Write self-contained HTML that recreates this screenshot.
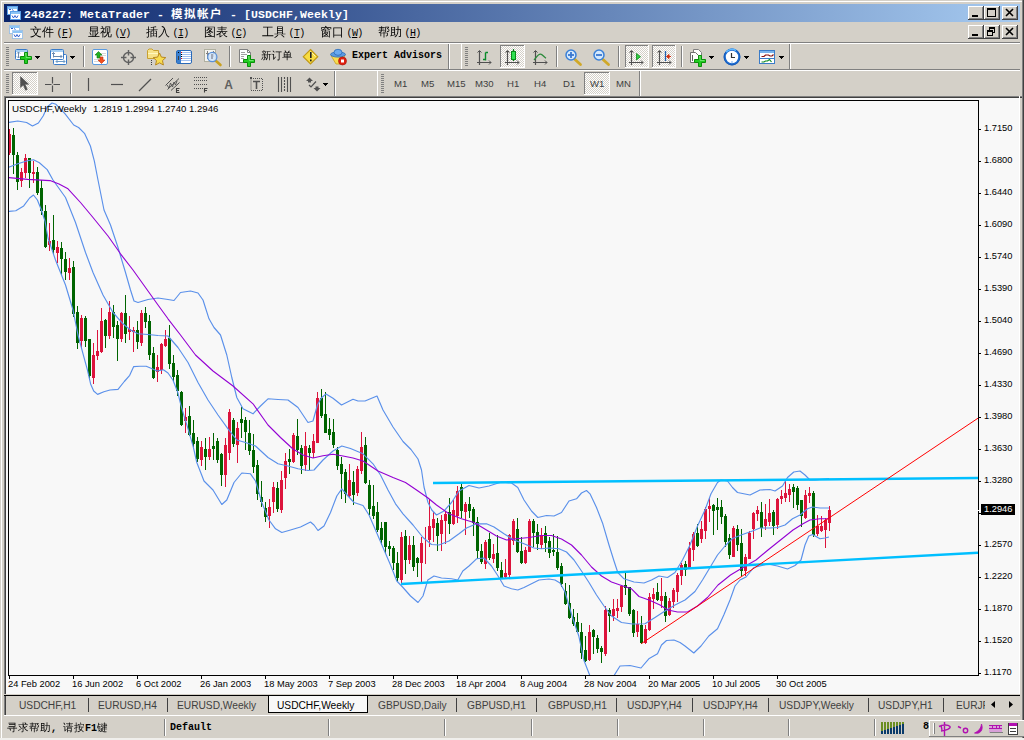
<!DOCTYPE html><html><head><meta charset="utf-8"><title>248227: MetaTrader - 模拟帐户 - [USDCHF,Weekly]</title>
<style>
html,body{margin:0;padding:0;background:#d4d0c8;overflow:hidden}
body{width:1024px;height:740px;position:relative;font-family:"Liberation Sans","Noto Sans CJK SC",sans-serif}
svg{position:absolute;left:0;top:0;display:block}
.t{position:absolute;white-space:nowrap;line-height:1;color:#000}
.ui{font-family:"Liberation Mono","WenQuanYi Zen Hei","Noto Sans CJK SC",monospace}
.cjb{font-family:"Noto Sans CJK SC",sans-serif;font-weight:bold}
.cj{font-family:"WenQuanYi Zen Hei","Noto Sans CJK SC",sans-serif}
.ax{font-size:9.3px;font-family:"Liberation Sans",sans-serif}
.tab{font-size:10.2px;color:#404040;font-family:"Liberation Sans",sans-serif;transform:scaleY(1.08);transform-origin:0 0}
.per{font-size:9.6px;color:#404040;font-family:"Liberation Sans",sans-serif}
</style></head><body>
<svg width="1024" height="740" viewBox="0 0 1024 740">
<defs>
<linearGradient id="tg" x1="0" y1="0" x2="1" y2="0"><stop offset="0" stop-color="#0a246a"/><stop offset="1" stop-color="#a6caf0"/></linearGradient>
<pattern id="hat" width="2" height="2" patternUnits="userSpaceOnUse"><rect width="2" height="2" fill="#ffffff"/><rect width="1" height="1" fill="#d4d0c8"/><rect x="1" y="1" width="1" height="1" fill="#d4d0c8"/></pattern>
<clipPath id="cc"><rect x="9" y="101" width="969" height="574"/></clipPath>
</defs>
<g shape-rendering="crispEdges">
<rect x="0" y="0" width="1024" height="740" fill="#d4d0c8" />
<rect x="1" y="1" width="1021" height="1" fill="#ffffff" />
<rect x="1" y="1" width="1" height="738" fill="#ffffff" />
<rect x="1022" y="0" width="1" height="740" fill="#808080" />
<rect x="1023" y="0" width="1" height="740" fill="#404040" />
<rect x="0" y="738" width="1024" height="2" fill="#f0efec" />
<rect x="4" y="4" width="1016" height="18" fill="url(#tg)" />
<rect x="4" y="42" width="1016" height="1" fill="#808080" />
<rect x="4" y="43" width="1016" height="1" fill="#ffffff" />
<rect x="4" y="69" width="1016" height="1" fill="#808080" />
<rect x="4" y="70" width="1016" height="1" fill="#ffffff" />
<rect x="6" y="47" width="3" height="1" fill="#808080" />
<rect x="6" y="49" width="3" height="1" fill="#808080" />
<rect x="6" y="51" width="3" height="1" fill="#808080" />
<rect x="6" y="53" width="3" height="1" fill="#808080" />
<rect x="6" y="55" width="3" height="1" fill="#808080" />
<rect x="6" y="57" width="3" height="1" fill="#808080" />
<rect x="6" y="59" width="3" height="1" fill="#808080" />
<rect x="6" y="61" width="3" height="1" fill="#808080" />
<rect x="6" y="63" width="3" height="1" fill="#808080" />
<rect x="6" y="65" width="3" height="1" fill="#808080" />
<rect x="83" y="46" width="1" height="21" fill="#808080" />
<rect x="84" y="46" width="1" height="21" fill="#ffffff" />
<rect x="229" y="46" width="1" height="21" fill="#808080" />
<rect x="230" y="46" width="1" height="21" fill="#ffffff" />
<rect x="448" y="44" width="1" height="25" fill="#808080" />
<rect x="449" y="44" width="1" height="25" fill="#ffffff" />
<rect x="461" y="44" width="1" height="25" fill="#ffffff" />
<rect x="465" y="47" width="3" height="1" fill="#808080" />
<rect x="465" y="49" width="3" height="1" fill="#808080" />
<rect x="465" y="51" width="3" height="1" fill="#808080" />
<rect x="465" y="53" width="3" height="1" fill="#808080" />
<rect x="465" y="55" width="3" height="1" fill="#808080" />
<rect x="465" y="57" width="3" height="1" fill="#808080" />
<rect x="465" y="59" width="3" height="1" fill="#808080" />
<rect x="465" y="61" width="3" height="1" fill="#808080" />
<rect x="465" y="63" width="3" height="1" fill="#808080" />
<rect x="465" y="65" width="3" height="1" fill="#808080" />
<rect x="500" y="45" width="25" height="23" fill="url(#hat)" />
<rect x="500" y="45" width="25" height="1" fill="#808080" />
<rect x="500" y="45" width="1" height="23" fill="#808080" />
<rect x="500" y="67" width="25" height="1" fill="#ffffff" />
<rect x="524" y="45" width="1" height="23" fill="#ffffff" />
<rect x="556" y="46" width="1" height="21" fill="#808080" />
<rect x="557" y="46" width="1" height="21" fill="#ffffff" />
<rect x="618" y="46" width="1" height="21" fill="#808080" />
<rect x="619" y="46" width="1" height="21" fill="#ffffff" />
<rect x="625" y="45" width="24" height="23" fill="url(#hat)" />
<rect x="625" y="45" width="24" height="1" fill="#808080" />
<rect x="625" y="45" width="1" height="23" fill="#808080" />
<rect x="625" y="67" width="24" height="1" fill="#ffffff" />
<rect x="648" y="45" width="1" height="23" fill="#ffffff" />
<rect x="652" y="45" width="24" height="23" fill="url(#hat)" />
<rect x="652" y="45" width="24" height="1" fill="#808080" />
<rect x="652" y="45" width="1" height="23" fill="#808080" />
<rect x="652" y="67" width="24" height="1" fill="#ffffff" />
<rect x="675" y="45" width="1" height="23" fill="#ffffff" />
<rect x="681" y="46" width="1" height="21" fill="#808080" />
<rect x="682" y="46" width="1" height="21" fill="#ffffff" />
<rect x="789" y="44" width="1" height="25" fill="#808080" />
<rect x="790" y="44" width="1" height="25" fill="#ffffff" />
<rect x="6" y="74" width="3" height="1" fill="#808080" />
<rect x="6" y="76" width="3" height="1" fill="#808080" />
<rect x="6" y="78" width="3" height="1" fill="#808080" />
<rect x="6" y="80" width="3" height="1" fill="#808080" />
<rect x="6" y="82" width="3" height="1" fill="#808080" />
<rect x="6" y="84" width="3" height="1" fill="#808080" />
<rect x="6" y="86" width="3" height="1" fill="#808080" />
<rect x="6" y="88" width="3" height="1" fill="#808080" />
<rect x="6" y="90" width="3" height="1" fill="#808080" />
<rect x="6" y="92" width="3" height="1" fill="#808080" />
<rect x="12" y="72" width="26" height="23" fill="url(#hat)" />
<rect x="12" y="72" width="26" height="1" fill="#808080" />
<rect x="12" y="72" width="1" height="23" fill="#808080" />
<rect x="12" y="94" width="26" height="1" fill="#ffffff" />
<rect x="37" y="72" width="1" height="23" fill="#ffffff" />
<rect x="70" y="73" width="1" height="21" fill="#808080" />
<rect x="71" y="73" width="1" height="21" fill="#ffffff" />
<rect x="334" y="71" width="1" height="25" fill="#808080" />
<rect x="335" y="71" width="1" height="25" fill="#ffffff" />
<rect x="377" y="71" width="1" height="25" fill="#ffffff" />
<rect x="381" y="74" width="3" height="1" fill="#808080" />
<rect x="381" y="76" width="3" height="1" fill="#808080" />
<rect x="381" y="78" width="3" height="1" fill="#808080" />
<rect x="381" y="80" width="3" height="1" fill="#808080" />
<rect x="381" y="82" width="3" height="1" fill="#808080" />
<rect x="381" y="84" width="3" height="1" fill="#808080" />
<rect x="381" y="86" width="3" height="1" fill="#808080" />
<rect x="381" y="88" width="3" height="1" fill="#808080" />
<rect x="381" y="90" width="3" height="1" fill="#808080" />
<rect x="381" y="92" width="3" height="1" fill="#808080" />
<rect x="584" y="72" width="26" height="23" fill="url(#hat)" />
<rect x="584" y="72" width="26" height="1" fill="#808080" />
<rect x="584" y="72" width="1" height="23" fill="#808080" />
<rect x="584" y="94" width="26" height="1" fill="#ffffff" />
<rect x="609" y="72" width="1" height="23" fill="#ffffff" />
<rect x="639" y="71" width="1" height="25" fill="#808080" />
<rect x="640" y="71" width="1" height="25" fill="#ffffff" />
<rect x="4" y="96" width="1018" height="1" fill="#808080" />
<rect x="4" y="96" width="1" height="599" fill="#808080" />
<rect x="5" y="97" width="1017" height="1" fill="#404040" />
<rect x="5" y="97" width="1" height="598" fill="#404040" />
<rect x="6" y="98" width="1013" height="596" fill="#f8f8f8" />
<rect x="1019" y="96" width="1" height="599" fill="#ffffff" />
<rect x="4" y="694" width="1016" height="1" fill="#d4d0c8" />
<rect x="4" y="695" width="1016" height="1" fill="#000000" />
<rect x="4" y="696" width="1" height="19" fill="#808080" />
<rect x="5" y="696" width="1" height="19" fill="#404040" />
<rect x="268" y="696" width="100" height="16" fill="#f8f8f8" />
<rect x="268" y="696" width="1" height="16" fill="#000000" />
<rect x="367" y="696" width="1" height="16" fill="#000000" />
<rect x="268" y="712" width="100" height="1" fill="#000000" />
<rect x="88" y="698" width="1" height="14" fill="#404040" />
<rect x="167" y="698" width="1" height="14" fill="#404040" />
<rect x="456" y="698" width="1" height="14" fill="#404040" />
<rect x="536" y="698" width="1" height="14" fill="#404040" />
<rect x="616" y="698" width="1" height="14" fill="#404040" />
<rect x="692" y="698" width="1" height="14" fill="#404040" />
<rect x="768" y="698" width="1" height="14" fill="#404040" />
<rect x="868" y="698" width="1" height="14" fill="#404040" />
<rect x="943" y="698" width="1" height="14" fill="#404040" />
<rect x="164" y="719" width="1" height="17" fill="#808080" />
<rect x="165" y="719" width="1" height="17" fill="#ffffff" />
<rect x="328" y="719" width="1" height="17" fill="#808080" />
<rect x="329" y="719" width="1" height="17" fill="#ffffff" />
<rect x="444" y="719" width="1" height="17" fill="#808080" />
<rect x="445" y="719" width="1" height="17" fill="#ffffff" />
<rect x="531" y="719" width="1" height="17" fill="#808080" />
<rect x="532" y="719" width="1" height="17" fill="#ffffff" />
<rect x="617" y="719" width="1" height="17" fill="#808080" />
<rect x="618" y="719" width="1" height="17" fill="#ffffff" />
<rect x="703" y="719" width="1" height="17" fill="#808080" />
<rect x="704" y="719" width="1" height="17" fill="#ffffff" />
<rect x="788" y="719" width="1" height="17" fill="#808080" />
<rect x="789" y="719" width="1" height="17" fill="#ffffff" />
<rect x="874" y="719" width="1" height="17" fill="#808080" />
<rect x="875" y="719" width="1" height="17" fill="#ffffff" />
<rect x="4" y="715" width="1016" height="1" fill="#ffffff" />
<rect x="8" y="100" width="971" height="1" fill="#000" />
<rect x="8" y="675" width="971" height="1" fill="#000" />
<rect x="8" y="100" width="1" height="576" fill="#000" />
<rect x="978" y="100" width="1" height="576" fill="#000" />
<rect x="979" y="129" width="2" height="1" fill="#000" />
<rect x="979" y="161" width="2" height="1" fill="#000" />
<rect x="979" y="193" width="2" height="1" fill="#000" />
<rect x="979" y="225" width="2" height="1" fill="#000" />
<rect x="979" y="257" width="2" height="1" fill="#000" />
<rect x="979" y="289" width="2" height="1" fill="#000" />
<rect x="979" y="321" width="2" height="1" fill="#000" />
<rect x="979" y="353" width="2" height="1" fill="#000" />
<rect x="979" y="385" width="2" height="1" fill="#000" />
<rect x="979" y="417" width="2" height="1" fill="#000" />
<rect x="979" y="449" width="2" height="1" fill="#000" />
<rect x="979" y="481" width="2" height="1" fill="#000" />
<rect x="979" y="513" width="2" height="1" fill="#000" />
<rect x="979" y="545" width="2" height="1" fill="#000" />
<rect x="979" y="577" width="2" height="1" fill="#000" />
<rect x="979" y="609" width="2" height="1" fill="#000" />
<rect x="979" y="641" width="2" height="1" fill="#000" />
<rect x="979" y="673" width="2" height="1" fill="#000" />
<rect x="9" y="676" width="1" height="3" fill="#000" />
<rect x="73" y="676" width="1" height="3" fill="#000" />
<rect x="137" y="676" width="1" height="3" fill="#000" />
<rect x="201" y="676" width="1" height="3" fill="#000" />
<rect x="265" y="676" width="1" height="3" fill="#000" />
<rect x="329" y="676" width="1" height="3" fill="#000" />
<rect x="393" y="676" width="1" height="3" fill="#000" />
<rect x="457" y="676" width="1" height="3" fill="#000" />
<rect x="521" y="676" width="1" height="3" fill="#000" />
<rect x="585" y="676" width="1" height="3" fill="#000" />
<rect x="649" y="676" width="1" height="3" fill="#000" />
<rect x="713" y="676" width="1" height="3" fill="#000" />
<rect x="777" y="676" width="1" height="3" fill="#000" />
</g>
<g clip-path="url(#cc)">
<g shape-rendering="crispEdges">
<rect x="9" y="129" width="1" height="26" fill="#dc143c" />
<rect x="8" y="134" width="3" height="19" fill="#dc143c" />
<rect x="13" y="128" width="1" height="46" fill="#006400" />
<rect x="12" y="135" width="3" height="20" fill="#006400" />
<rect x="17" y="152" width="1" height="38" fill="#006400" />
<rect x="16" y="155" width="3" height="27" fill="#006400" />
<rect x="21" y="168" width="1" height="19" fill="#dc143c" />
<rect x="20" y="172" width="3" height="9" fill="#dc143c" />
<rect x="25" y="154" width="1" height="24" fill="#dc143c" />
<rect x="24" y="158" width="3" height="15" fill="#dc143c" />
<rect x="29" y="158" width="1" height="30" fill="#006400" />
<rect x="28" y="158" width="3" height="15" fill="#006400" />
<rect x="33" y="161" width="1" height="22" fill="#dc143c" />
<rect x="32" y="172" width="3" height="2" fill="#dc143c" />
<rect x="37" y="167" width="1" height="28" fill="#006400" />
<rect x="36" y="172" width="3" height="21" fill="#006400" />
<rect x="41" y="180" width="1" height="35" fill="#006400" />
<rect x="40" y="188" width="3" height="23" fill="#006400" />
<rect x="45" y="205" width="1" height="43" fill="#006400" />
<rect x="44" y="211" width="3" height="36" fill="#006400" />
<rect x="49" y="223" width="1" height="28" fill="#dc143c" />
<rect x="48" y="241" width="3" height="4" fill="#dc143c" />
<rect x="53" y="215" width="1" height="39" fill="#006400" />
<rect x="52" y="240" width="3" height="10" fill="#006400" />
<rect x="57" y="241" width="1" height="22" fill="#dc143c" />
<rect x="56" y="247" width="3" height="6" fill="#dc143c" />
<rect x="61" y="242" width="1" height="33" fill="#006400" />
<rect x="60" y="248" width="3" height="11" fill="#006400" />
<rect x="65" y="252" width="1" height="28" fill="#006400" />
<rect x="64" y="259" width="3" height="13" fill="#006400" />
<rect x="69" y="258" width="1" height="22" fill="#dc143c" />
<rect x="68" y="268" width="3" height="5" fill="#dc143c" />
<rect x="73" y="261" width="1" height="56" fill="#006400" />
<rect x="72" y="267" width="3" height="47" fill="#006400" />
<rect x="77" y="306" width="1" height="43" fill="#006400" />
<rect x="76" y="312" width="3" height="31" fill="#006400" />
<rect x="81" y="315" width="1" height="33" fill="#dc143c" />
<rect x="80" y="318" width="3" height="23" fill="#dc143c" />
<rect x="85" y="316" width="1" height="31" fill="#006400" />
<rect x="84" y="318" width="3" height="23" fill="#006400" />
<rect x="89" y="339" width="1" height="41" fill="#006400" />
<rect x="88" y="339" width="3" height="37" fill="#006400" />
<rect x="93" y="343" width="1" height="41" fill="#dc143c" />
<rect x="92" y="355" width="3" height="23" fill="#dc143c" />
<rect x="97" y="330" width="1" height="30" fill="#dc143c" />
<rect x="96" y="351" width="3" height="5" fill="#dc143c" />
<rect x="101" y="308" width="1" height="45" fill="#dc143c" />
<rect x="100" y="321" width="3" height="31" fill="#dc143c" />
<rect x="105" y="319" width="1" height="29" fill="#006400" />
<rect x="104" y="320" width="3" height="16" fill="#006400" />
<rect x="109" y="301" width="1" height="38" fill="#dc143c" />
<rect x="108" y="312" width="3" height="24" fill="#dc143c" />
<rect x="113" y="305" width="1" height="33" fill="#006400" />
<rect x="112" y="312" width="3" height="15" fill="#006400" />
<rect x="117" y="321" width="1" height="40" fill="#006400" />
<rect x="116" y="325" width="3" height="14" fill="#006400" />
<rect x="121" y="312" width="1" height="30" fill="#dc143c" />
<rect x="120" y="313" width="3" height="26" fill="#dc143c" />
<rect x="125" y="295" width="1" height="48" fill="#006400" />
<rect x="124" y="313" width="3" height="21" fill="#006400" />
<rect x="129" y="316" width="1" height="24" fill="#dc143c" />
<rect x="128" y="329" width="3" height="3" fill="#dc143c" />
<rect x="133" y="327" width="1" height="25" fill="#dc143c" />
<rect x="132" y="330" width="3" height="2" fill="#dc143c" />
<rect x="137" y="321" width="1" height="28" fill="#006400" />
<rect x="136" y="330" width="3" height="12" fill="#006400" />
<rect x="141" y="310" width="1" height="36" fill="#dc143c" />
<rect x="140" y="313" width="3" height="30" fill="#dc143c" />
<rect x="145" y="307" width="1" height="21" fill="#006400" />
<rect x="144" y="313" width="3" height="9" fill="#006400" />
<rect x="149" y="315" width="1" height="45" fill="#006400" />
<rect x="148" y="321" width="3" height="34" fill="#006400" />
<rect x="153" y="347" width="1" height="32" fill="#006400" />
<rect x="152" y="353" width="3" height="25" fill="#006400" />
<rect x="157" y="355" width="1" height="27" fill="#dc143c" />
<rect x="156" y="367" width="3" height="5" fill="#dc143c" />
<rect x="161" y="343" width="1" height="31" fill="#dc143c" />
<rect x="160" y="344" width="3" height="26" fill="#dc143c" />
<rect x="165" y="330" width="1" height="17" fill="#dc143c" />
<rect x="164" y="339" width="3" height="7" fill="#dc143c" />
<rect x="169" y="325" width="1" height="44" fill="#006400" />
<rect x="168" y="338" width="3" height="26" fill="#006400" />
<rect x="173" y="355" width="1" height="26" fill="#006400" />
<rect x="172" y="363" width="3" height="14" fill="#006400" />
<rect x="177" y="370" width="1" height="26" fill="#006400" />
<rect x="176" y="375" width="3" height="16" fill="#006400" />
<rect x="181" y="391" width="1" height="35" fill="#006400" />
<rect x="180" y="392" width="3" height="33" fill="#006400" />
<rect x="185" y="408" width="1" height="25" fill="#dc143c" />
<rect x="184" y="417" width="3" height="4" fill="#dc143c" />
<rect x="189" y="406" width="1" height="30" fill="#006400" />
<rect x="188" y="416" width="3" height="19" fill="#006400" />
<rect x="193" y="420" width="1" height="27" fill="#006400" />
<rect x="192" y="433" width="3" height="11" fill="#006400" />
<rect x="197" y="437" width="1" height="25" fill="#006400" />
<rect x="196" y="441" width="3" height="18" fill="#006400" />
<rect x="201" y="441" width="1" height="25" fill="#dc143c" />
<rect x="200" y="447" width="3" height="13" fill="#dc143c" />
<rect x="205" y="438" width="1" height="32" fill="#006400" />
<rect x="204" y="449" width="3" height="8" fill="#006400" />
<rect x="209" y="437" width="1" height="23" fill="#dc143c" />
<rect x="208" y="449" width="3" height="8" fill="#dc143c" />
<rect x="213" y="433" width="1" height="27" fill="#006400" />
<rect x="212" y="446" width="3" height="3" fill="#006400" />
<rect x="217" y="438" width="1" height="25" fill="#006400" />
<rect x="216" y="441" width="3" height="19" fill="#006400" />
<rect x="221" y="453" width="1" height="33" fill="#006400" />
<rect x="220" y="454" width="3" height="21" fill="#006400" />
<rect x="225" y="438" width="1" height="49" fill="#dc143c" />
<rect x="224" y="445" width="3" height="30" fill="#dc143c" />
<rect x="229" y="409" width="1" height="51" fill="#dc143c" />
<rect x="228" y="412" width="3" height="41" fill="#dc143c" />
<rect x="233" y="418" width="1" height="29" fill="#006400" />
<rect x="232" y="420" width="3" height="24" fill="#006400" />
<rect x="237" y="422" width="1" height="41" fill="#dc143c" />
<rect x="236" y="428" width="3" height="17" fill="#dc143c" />
<rect x="241" y="407" width="1" height="31" fill="#006400" />
<rect x="240" y="419" width="3" height="4" fill="#006400" />
<rect x="245" y="417" width="1" height="33" fill="#006400" />
<rect x="244" y="420" width="3" height="12" fill="#006400" />
<rect x="249" y="420" width="1" height="35" fill="#006400" />
<rect x="248" y="433" width="3" height="18" fill="#006400" />
<rect x="253" y="434" width="1" height="39" fill="#006400" />
<rect x="252" y="450" width="3" height="17" fill="#006400" />
<rect x="257" y="460" width="1" height="40" fill="#006400" />
<rect x="256" y="465" width="3" height="29" fill="#006400" />
<rect x="261" y="481" width="1" height="26" fill="#006400" />
<rect x="260" y="497" width="3" height="5" fill="#006400" />
<rect x="265" y="502" width="1" height="20" fill="#006400" />
<rect x="264" y="508" width="3" height="9" fill="#006400" />
<rect x="269" y="499" width="1" height="29" fill="#dc143c" />
<rect x="268" y="507" width="3" height="9" fill="#dc143c" />
<rect x="273" y="482" width="1" height="31" fill="#dc143c" />
<rect x="272" y="487" width="3" height="15" fill="#dc143c" />
<rect x="277" y="482" width="1" height="30" fill="#006400" />
<rect x="276" y="488" width="3" height="21" fill="#006400" />
<rect x="281" y="471" width="1" height="42" fill="#dc143c" />
<rect x="280" y="480" width="3" height="30" fill="#dc143c" />
<rect x="285" y="453" width="1" height="36" fill="#dc143c" />
<rect x="284" y="461" width="3" height="17" fill="#dc143c" />
<rect x="289" y="449" width="1" height="25" fill="#006400" />
<rect x="288" y="459" width="3" height="3" fill="#006400" />
<rect x="293" y="433" width="1" height="30" fill="#dc143c" />
<rect x="292" y="435" width="3" height="27" fill="#dc143c" />
<rect x="297" y="419" width="1" height="36" fill="#006400" />
<rect x="296" y="436" width="3" height="14" fill="#006400" />
<rect x="301" y="445" width="1" height="29" fill="#006400" />
<rect x="300" y="448" width="3" height="18" fill="#006400" />
<rect x="305" y="432" width="1" height="39" fill="#dc143c" />
<rect x="304" y="446" width="3" height="19" fill="#dc143c" />
<rect x="309" y="445" width="1" height="25" fill="#006400" />
<rect x="308" y="448" width="3" height="5" fill="#006400" />
<rect x="313" y="434" width="1" height="24" fill="#dc143c" />
<rect x="312" y="441" width="3" height="12" fill="#dc143c" />
<rect x="317" y="392" width="1" height="51" fill="#dc143c" />
<rect x="316" y="398" width="3" height="45" fill="#dc143c" />
<rect x="321" y="389" width="1" height="29" fill="#006400" />
<rect x="320" y="398" width="3" height="18" fill="#006400" />
<rect x="325" y="392" width="1" height="41" fill="#006400" />
<rect x="324" y="414" width="3" height="19" fill="#006400" />
<rect x="329" y="418" width="1" height="22" fill="#006400" />
<rect x="328" y="429" width="3" height="6" fill="#006400" />
<rect x="333" y="419" width="1" height="29" fill="#006400" />
<rect x="332" y="432" width="3" height="13" fill="#006400" />
<rect x="337" y="447" width="1" height="23" fill="#006400" />
<rect x="336" y="450" width="3" height="16" fill="#006400" />
<rect x="341" y="457" width="1" height="42" fill="#006400" />
<rect x="340" y="464" width="3" height="10" fill="#006400" />
<rect x="345" y="469" width="1" height="34" fill="#006400" />
<rect x="344" y="472" width="3" height="22" fill="#006400" />
<rect x="349" y="464" width="1" height="34" fill="#dc143c" />
<rect x="348" y="480" width="3" height="16" fill="#dc143c" />
<rect x="353" y="471" width="1" height="34" fill="#006400" />
<rect x="352" y="482" width="3" height="13" fill="#006400" />
<rect x="357" y="466" width="1" height="30" fill="#dc143c" />
<rect x="356" y="469" width="3" height="24" fill="#dc143c" />
<rect x="361" y="432" width="1" height="42" fill="#dc143c" />
<rect x="360" y="447" width="3" height="24" fill="#dc143c" />
<rect x="365" y="437" width="1" height="47" fill="#006400" />
<rect x="364" y="445" width="3" height="38" fill="#006400" />
<rect x="369" y="480" width="1" height="35" fill="#006400" />
<rect x="368" y="485" width="3" height="24" fill="#006400" />
<rect x="373" y="485" width="1" height="34" fill="#006400" />
<rect x="372" y="506" width="3" height="10" fill="#006400" />
<rect x="377" y="502" width="1" height="30" fill="#006400" />
<rect x="376" y="512" width="3" height="18" fill="#006400" />
<rect x="381" y="522" width="1" height="23" fill="#006400" />
<rect x="380" y="528" width="3" height="12" fill="#006400" />
<rect x="385" y="522" width="1" height="32" fill="#006400" />
<rect x="384" y="522" width="3" height="25" fill="#006400" />
<rect x="389" y="541" width="1" height="15" fill="#006400" />
<rect x="388" y="546" width="3" height="3" fill="#006400" />
<rect x="393" y="546" width="1" height="24" fill="#006400" />
<rect x="392" y="548" width="3" height="15" fill="#006400" />
<rect x="397" y="552" width="1" height="30" fill="#006400" />
<rect x="396" y="563" width="3" height="15" fill="#006400" />
<rect x="401" y="532" width="1" height="52" fill="#dc143c" />
<rect x="400" y="537" width="3" height="43" fill="#dc143c" />
<rect x="405" y="530" width="1" height="44" fill="#006400" />
<rect x="404" y="536" width="3" height="24" fill="#006400" />
<rect x="409" y="536" width="1" height="28" fill="#dc143c" />
<rect x="408" y="545" width="3" height="15" fill="#dc143c" />
<rect x="413" y="536" width="1" height="35" fill="#006400" />
<rect x="412" y="545" width="3" height="22" fill="#006400" />
<rect x="417" y="557" width="1" height="20" fill="#006400" />
<rect x="416" y="558" width="3" height="5" fill="#006400" />
<rect x="421" y="537" width="1" height="45" fill="#dc143c" />
<rect x="420" y="543" width="3" height="20" fill="#dc143c" />
<rect x="425" y="527" width="1" height="37" fill="#dc143c" />
<rect x="429" y="499" width="1" height="48" fill="#dc143c" />
<rect x="428" y="526" width="3" height="14" fill="#dc143c" />
<rect x="433" y="512" width="1" height="30" fill="#dc143c" />
<rect x="432" y="519" width="3" height="9" fill="#dc143c" />
<rect x="437" y="518" width="1" height="33" fill="#006400" />
<rect x="436" y="523" width="3" height="13" fill="#006400" />
<rect x="441" y="515" width="1" height="36" fill="#dc143c" />
<rect x="440" y="520" width="3" height="14" fill="#dc143c" />
<rect x="445" y="511" width="1" height="33" fill="#dc143c" />
<rect x="444" y="514" width="3" height="7" fill="#dc143c" />
<rect x="449" y="498" width="1" height="36" fill="#006400" />
<rect x="448" y="512" width="3" height="12" fill="#006400" />
<rect x="453" y="500" width="1" height="25" fill="#dc143c" />
<rect x="452" y="510" width="3" height="14" fill="#dc143c" />
<rect x="457" y="486" width="1" height="37" fill="#dc143c" />
<rect x="456" y="491" width="3" height="25" fill="#dc143c" />
<rect x="461" y="484" width="1" height="34" fill="#006400" />
<rect x="460" y="487" width="3" height="24" fill="#006400" />
<rect x="465" y="502" width="1" height="33" fill="#dc143c" />
<rect x="464" y="504" width="3" height="8" fill="#dc143c" />
<rect x="469" y="497" width="1" height="21" fill="#006400" />
<rect x="468" y="504" width="3" height="7" fill="#006400" />
<rect x="473" y="507" width="1" height="29" fill="#006400" />
<rect x="472" y="509" width="3" height="14" fill="#006400" />
<rect x="477" y="517" width="1" height="42" fill="#006400" />
<rect x="476" y="522" width="3" height="29" fill="#006400" />
<rect x="481" y="544" width="1" height="20" fill="#006400" />
<rect x="480" y="551" width="3" height="11" fill="#006400" />
<rect x="485" y="540" width="1" height="29" fill="#dc143c" />
<rect x="484" y="542" width="3" height="22" fill="#dc143c" />
<rect x="489" y="533" width="1" height="27" fill="#006400" />
<rect x="488" y="539" width="3" height="19" fill="#006400" />
<rect x="493" y="544" width="1" height="19" fill="#dc143c" />
<rect x="492" y="554" width="3" height="5" fill="#dc143c" />
<rect x="497" y="535" width="1" height="36" fill="#006400" />
<rect x="496" y="553" width="3" height="15" fill="#006400" />
<rect x="501" y="562" width="1" height="17" fill="#006400" />
<rect x="500" y="570" width="3" height="8" fill="#006400" />
<rect x="505" y="559" width="1" height="20" fill="#dc143c" />
<rect x="504" y="573" width="3" height="4" fill="#dc143c" />
<rect x="509" y="534" width="1" height="43" fill="#dc143c" />
<rect x="508" y="535" width="3" height="40" fill="#dc143c" />
<rect x="513" y="519" width="1" height="26" fill="#dc143c" />
<rect x="512" y="521" width="3" height="20" fill="#dc143c" />
<rect x="517" y="518" width="1" height="35" fill="#006400" />
<rect x="516" y="529" width="3" height="23" fill="#006400" />
<rect x="521" y="537" width="1" height="27" fill="#006400" />
<rect x="520" y="551" width="3" height="12" fill="#006400" />
<rect x="525" y="547" width="1" height="17" fill="#dc143c" />
<rect x="524" y="550" width="3" height="13" fill="#dc143c" />
<rect x="529" y="519" width="1" height="33" fill="#dc143c" />
<rect x="528" y="521" width="3" height="31" fill="#dc143c" />
<rect x="533" y="519" width="1" height="28" fill="#006400" />
<rect x="532" y="521" width="3" height="12" fill="#006400" />
<rect x="537" y="524" width="1" height="26" fill="#006400" />
<rect x="536" y="532" width="3" height="12" fill="#006400" />
<rect x="541" y="528" width="1" height="21" fill="#dc143c" />
<rect x="540" y="535" width="3" height="10" fill="#dc143c" />
<rect x="545" y="526" width="1" height="26" fill="#006400" />
<rect x="544" y="533" width="3" height="10" fill="#006400" />
<rect x="549" y="537" width="1" height="21" fill="#006400" />
<rect x="548" y="541" width="3" height="12" fill="#006400" />
<rect x="553" y="534" width="1" height="22" fill="#006400" />
<rect x="552" y="550" width="3" height="2" fill="#006400" />
<rect x="557" y="536" width="1" height="34" fill="#006400" />
<rect x="556" y="552" width="3" height="16" fill="#006400" />
<rect x="561" y="563" width="1" height="24" fill="#006400" />
<rect x="560" y="566" width="3" height="18" fill="#006400" />
<rect x="565" y="583" width="1" height="22" fill="#006400" />
<rect x="564" y="591" width="3" height="13" fill="#006400" />
<rect x="569" y="585" width="1" height="34" fill="#006400" />
<rect x="568" y="603" width="3" height="15" fill="#006400" />
<rect x="573" y="609" width="1" height="17" fill="#006400" />
<rect x="572" y="617" width="3" height="7" fill="#006400" />
<rect x="577" y="613" width="1" height="20" fill="#006400" />
<rect x="576" y="622" width="3" height="10" fill="#006400" />
<rect x="581" y="623" width="1" height="36" fill="#006400" />
<rect x="580" y="632" width="3" height="21" fill="#006400" />
<rect x="585" y="636" width="1" height="26" fill="#006400" />
<rect x="584" y="650" width="3" height="11" fill="#006400" />
<rect x="589" y="625" width="1" height="36" fill="#dc143c" />
<rect x="588" y="632" width="3" height="28" fill="#dc143c" />
<rect x="593" y="629" width="1" height="25" fill="#006400" />
<rect x="592" y="630" width="3" height="7" fill="#006400" />
<rect x="597" y="635" width="1" height="18" fill="#006400" />
<rect x="596" y="638" width="3" height="11" fill="#006400" />
<rect x="601" y="646" width="1" height="17" fill="#006400" />
<rect x="600" y="648" width="3" height="4" fill="#006400" />
<rect x="605" y="606" width="1" height="50" fill="#dc143c" />
<rect x="604" y="610" width="3" height="44" fill="#dc143c" />
<rect x="609" y="608" width="1" height="24" fill="#006400" />
<rect x="608" y="610" width="3" height="6" fill="#006400" />
<rect x="613" y="599" width="1" height="22" fill="#dc143c" />
<rect x="612" y="609" width="3" height="7" fill="#dc143c" />
<rect x="617" y="599" width="1" height="19" fill="#dc143c" />
<rect x="616" y="608" width="3" height="3" fill="#dc143c" />
<rect x="621" y="585" width="1" height="27" fill="#dc143c" />
<rect x="620" y="586" width="3" height="21" fill="#dc143c" />
<rect x="625" y="573" width="1" height="22" fill="#006400" />
<rect x="624" y="585" width="3" height="3" fill="#006400" />
<rect x="629" y="587" width="1" height="29" fill="#006400" />
<rect x="628" y="587" width="3" height="27" fill="#006400" />
<rect x="633" y="609" width="1" height="28" fill="#006400" />
<rect x="632" y="610" width="3" height="23" fill="#006400" />
<rect x="637" y="611" width="1" height="26" fill="#dc143c" />
<rect x="636" y="624" width="3" height="8" fill="#dc143c" />
<rect x="641" y="616" width="1" height="28" fill="#006400" />
<rect x="640" y="625" width="3" height="18" fill="#006400" />
<rect x="645" y="625" width="1" height="19" fill="#dc143c" />
<rect x="644" y="629" width="3" height="14" fill="#dc143c" />
<rect x="649" y="593" width="1" height="38" fill="#dc143c" />
<rect x="648" y="597" width="3" height="33" fill="#dc143c" />
<rect x="653" y="588" width="1" height="21" fill="#dc143c" />
<rect x="652" y="594" width="3" height="5" fill="#dc143c" />
<rect x="657" y="583" width="1" height="18" fill="#006400" />
<rect x="656" y="592" width="3" height="8" fill="#006400" />
<rect x="661" y="578" width="1" height="30" fill="#dc143c" />
<rect x="660" y="596" width="3" height="5" fill="#dc143c" />
<rect x="665" y="592" width="1" height="30" fill="#006400" />
<rect x="664" y="596" width="3" height="20" fill="#006400" />
<rect x="669" y="598" width="1" height="18" fill="#dc143c" />
<rect x="668" y="601" width="3" height="14" fill="#dc143c" />
<rect x="673" y="588" width="1" height="20" fill="#dc143c" />
<rect x="672" y="590" width="3" height="12" fill="#dc143c" />
<rect x="677" y="573" width="1" height="29" fill="#dc143c" />
<rect x="676" y="575" width="3" height="17" fill="#dc143c" />
<rect x="681" y="563" width="1" height="22" fill="#dc143c" />
<rect x="680" y="565" width="3" height="11" fill="#dc143c" />
<rect x="685" y="561" width="1" height="15" fill="#006400" />
<rect x="684" y="564" width="3" height="6" fill="#006400" />
<rect x="689" y="542" width="1" height="26" fill="#dc143c" />
<rect x="688" y="548" width="3" height="20" fill="#dc143c" />
<rect x="693" y="532" width="1" height="29" fill="#dc143c" />
<rect x="692" y="534" width="3" height="16" fill="#dc143c" />
<rect x="697" y="524" width="1" height="23" fill="#006400" />
<rect x="696" y="533" width="3" height="13" fill="#006400" />
<rect x="701" y="521" width="1" height="22" fill="#dc143c" />
<rect x="700" y="529" width="3" height="10" fill="#dc143c" />
<rect x="705" y="507" width="1" height="32" fill="#dc143c" />
<rect x="704" y="509" width="3" height="22" fill="#dc143c" />
<rect x="709" y="498" width="1" height="24" fill="#dc143c" />
<rect x="708" y="506" width="3" height="3" fill="#dc143c" />
<rect x="713" y="504" width="1" height="31" fill="#006400" />
<rect x="712" y="505" width="3" height="6" fill="#006400" />
<rect x="717" y="498" width="1" height="32" fill="#006400" />
<rect x="716" y="507" width="3" height="3" fill="#006400" />
<rect x="721" y="500" width="1" height="24" fill="#006400" />
<rect x="720" y="507" width="3" height="10" fill="#006400" />
<rect x="725" y="514" width="1" height="33" fill="#006400" />
<rect x="724" y="516" width="3" height="26" fill="#006400" />
<rect x="729" y="534" width="1" height="25" fill="#006400" />
<rect x="728" y="538" width="3" height="17" fill="#006400" />
<rect x="733" y="526" width="1" height="31" fill="#dc143c" />
<rect x="732" y="528" width="3" height="29" fill="#dc143c" />
<rect x="737" y="525" width="1" height="26" fill="#006400" />
<rect x="736" y="529" width="3" height="16" fill="#006400" />
<rect x="741" y="529" width="1" height="47" fill="#006400" />
<rect x="740" y="543" width="3" height="28" fill="#006400" />
<rect x="745" y="554" width="1" height="22" fill="#dc143c" />
<rect x="744" y="557" width="3" height="14" fill="#dc143c" />
<rect x="749" y="531" width="1" height="28" fill="#dc143c" />
<rect x="748" y="533" width="3" height="26" fill="#dc143c" />
<rect x="753" y="512" width="1" height="27" fill="#dc143c" />
<rect x="752" y="513" width="3" height="16" fill="#dc143c" />
<rect x="757" y="506" width="1" height="15" fill="#dc143c" />
<rect x="756" y="510" width="3" height="4" fill="#dc143c" />
<rect x="761" y="502" width="1" height="35" fill="#006400" />
<rect x="760" y="512" width="3" height="16" fill="#006400" />
<rect x="765" y="504" width="1" height="26" fill="#dc143c" />
<rect x="764" y="519" width="3" height="7" fill="#dc143c" />
<rect x="769" y="499" width="1" height="27" fill="#dc143c" />
<rect x="768" y="513" width="3" height="9" fill="#dc143c" />
<rect x="773" y="510" width="1" height="25" fill="#006400" />
<rect x="772" y="512" width="3" height="14" fill="#006400" />
<rect x="777" y="498" width="1" height="31" fill="#dc143c" />
<rect x="776" y="499" width="3" height="26" fill="#dc143c" />
<rect x="781" y="490" width="1" height="14" fill="#dc143c" />
<rect x="780" y="496" width="3" height="3" fill="#dc143c" />
<rect x="785" y="481" width="1" height="21" fill="#dc143c" />
<rect x="784" y="493" width="3" height="5" fill="#dc143c" />
<rect x="789" y="484" width="1" height="18" fill="#dc143c" />
<rect x="788" y="489" width="3" height="6" fill="#dc143c" />
<rect x="793" y="484" width="1" height="24" fill="#006400" />
<rect x="792" y="487" width="3" height="5" fill="#006400" />
<rect x="797" y="486" width="1" height="24" fill="#006400" />
<rect x="796" y="488" width="3" height="17" fill="#006400" />
<rect x="801" y="500" width="1" height="27" fill="#006400" />
<rect x="800" y="500" width="3" height="16" fill="#006400" />
<rect x="805" y="490" width="1" height="29" fill="#dc143c" />
<rect x="804" y="495" width="3" height="23" fill="#dc143c" />
<rect x="809" y="487" width="1" height="16" fill="#dc143c" />
<rect x="808" y="493" width="3" height="3" fill="#dc143c" />
<rect x="813" y="491" width="1" height="46" fill="#006400" />
<rect x="812" y="493" width="3" height="42" fill="#006400" />
<rect x="817" y="515" width="1" height="21" fill="#dc143c" />
<rect x="816" y="526" width="3" height="8" fill="#dc143c" />
<rect x="821" y="516" width="1" height="16" fill="#dc143c" />
<rect x="820" y="526" width="3" height="5" fill="#dc143c" />
<rect x="825" y="518" width="1" height="30" fill="#dc143c" />
<rect x="824" y="520" width="3" height="10" fill="#dc143c" />
<rect x="829" y="506" width="1" height="25" fill="#dc143c" />
<rect x="828" y="510" width="3" height="13" fill="#dc143c" />
</g>
<path d="M8.0,122.5 L17.8,121.0 L26.6,122.5 L32.5,126.0 L38.4,123.0 L43.3,115.7 L47.2,106.9 L52.0,103.0 L56.0,104.3 L64.9,113.7 L73.7,125.0 L78.6,127.5 L84.5,133.3 L90.4,146.0 L94.3,160.8 L98.0,180.0 L104.0,210.0 L110.5,225.0 L118.0,247.5 L125.5,272.5 L130.5,290.0 L134.0,301.0 L138.0,302.5 L148.0,299.5 L158.0,298.0 L168.0,299.5 L174.0,300.5 L180.5,292.5 L190.5,291.0 L198.0,293.0 L203.0,300.0 L209.0,318.8 L214.0,327.5 L220.5,335.0 L226.8,355.0 L231.8,377.5 L236.8,397.5 L243.0,408.8 L253.0,413.8 L260.5,406.0 L268.0,398.8 L278.0,399.5 L288.0,400.0 L298.0,407.5 L308.0,422.5 L313.0,421.0 L317.4,405.0 L321.3,398.0 L326.0,394.0 L333.0,398.3 L341.5,405.0 L353.0,399.3 L358.0,401.0 L365.0,401.0 L377.0,396.0 L383.0,410.0 L393.0,427.0 L403.0,441.5 L411.0,449.5 L418.0,459.0 L421.5,470.0 L424.0,487.0 L428.0,502.5 L431.8,510.0 L436.5,515.0 L444.0,511.0 L451.5,502.5 L459.0,491.0 L469.0,485.5 L479.0,488.0 L489.0,486.0 L501.5,482.0 L511.5,483.0 L517.8,487.5 L524.0,500.0 L531.5,511.0 L537.8,517.5 L546.5,515.5 L554.0,516.0 L561.5,512.5 L569.0,501.0 L576.5,498.8 L581.5,493.0 L586.5,490.5 L590.0,493.8 L596.5,507.5 L602.8,523.8 L609.0,545.0 L614.0,561.0 L617.8,572.5 L624.0,578.8 L634.0,582.0 L644.0,583.0 L651.5,580.0 L659.0,576.0 L667.5,577.5 L675.0,572.5 L682.5,560.0 L690.0,545.0 L697.5,526.0 L705.0,510.0 L711.0,493.8 L717.5,482.5 L721.0,480.0 L727.5,481.0 L732.5,487.5 L737.5,492.5 L750.0,495.0 L760.0,490.0 L770.0,489.5 L775.0,491.0 L782.5,486.0 L787.5,477.5 L793.8,472.0 L800.0,471.0 L805.0,475.0 L810.0,480.0 L815.0,480.0 L829.0,478.5" fill="none" stroke="#5a90ea" stroke-width="1.15" stroke-linejoin="round"/>
<path d="M8.0,167.6 L17.8,163.7 L27.6,160.8 L33.5,159.8 L39.4,162.7 L47.2,169.6 L53.0,180.0 L65.5,197.5 L75.5,222.5 L85.5,252.5 L93.0,272.5 L103.0,295.0 L113.0,312.5 L123.0,323.8 L130.5,330.0 L138.0,333.8 L148.0,334.5 L158.0,335.5 L168.0,336.0 L178.0,347.5 L188.0,362.5 L198.0,382.5 L208.0,400.0 L218.0,415.0 L228.0,428.8 L236.8,440.0 L245.5,442.5 L255.5,446.0 L268.0,457.5 L278.0,463.8 L288.0,466.0 L298.0,468.8 L308.0,470.5 L314.0,470.0 L323.0,460.0 L333.0,451.0 L341.8,446.0 L350.5,448.5 L363.0,453.8 L373.0,463.8 L380.5,475.0 L388.0,490.0 L395.5,503.8 L403.0,513.8 L413.0,525.0 L423.0,537.5 L431.5,544.5 L439.0,545.0 L449.0,541.0 L459.0,533.8 L466.5,528.0 L476.5,523.8 L486.5,523.8 L494.0,527.0 L504.0,533.8 L514.0,540.0 L524.0,543.8 L534.0,548.0 L541.5,548.8 L549.0,548.0 L559.0,548.8 L566.5,552.0 L574.0,560.0 L581.5,571.0 L589.0,582.5 L596.5,595.0 L604.0,606.0 L611.5,616.0 L621.5,622.5 L632.5,624.0 L645.0,623.8 L655.0,617.5 L665.0,611.0 L675.0,605.0 L685.0,600.0 L695.0,591.5 L702.5,580.0 L710.0,567.5 L717.5,555.0 L725.0,546.0 L732.5,538.5 L742.5,534.5 L752.5,531.0 L760.0,528.0 L770.0,528.0 L777.5,527.5 L785.0,525.0 L792.5,518.8 L800.0,515.0 L807.5,508.8 L812.5,507.0 L820.0,508.0 L829.0,508.0" fill="none" stroke="#5a90ea" stroke-width="1.15" stroke-linejoin="round"/>
<path d="M8.0,211.4 L15.8,210.8 L23.7,205.9 L29.6,198.0 L33.5,195.0 L37.4,200.0 L41.3,209.8 L45.0,221.0 L48.0,238.0 L55.5,260.0 L65.5,285.0 L73.0,310.0 L78.0,335.0 L83.5,355.7 L87.4,369.8 L90.6,383.9 L93.7,391.0 L97.6,394.4 L103.9,391.7 L110.0,390.0 L118.0,389.4 L124.3,381.5 L129.7,375.3 L133.7,366.6 L140.0,366.2 L146.2,366.3 L151.0,368.2 L157.2,371.0 L163.4,369.8 L168.0,373.0 L172.9,380.0 L177.6,391.7 L180.7,404.3 L183.8,415.2 L187.0,425.4 L190.0,435.6 L193.2,446.6 L196.8,462.5 L204.0,481.0 L213.0,490.0 L221.8,504.5 L226.8,500.0 L234.0,482.5 L241.8,473.0 L250.5,473.8 L255.5,481.0 L261.8,502.5 L269.0,520.0 L275.5,528.8 L281.8,532.5 L290.5,530.0 L300.5,527.0 L310.5,522.0 L314.0,525.0 L318.0,530.5 L324.0,526.0 L330.5,512.5 L336.8,496.0 L341.8,488.8 L348.0,496.0 L354.0,502.5 L363.0,505.5 L369.0,515.0 L375.5,530.0 L383.0,547.5 L390.5,565.0 L396.8,581.0 L403.0,587.5 L410.5,596.0 L418.0,602.5 L423.0,596.0 L427.8,580.0 L434.0,576.0 L441.5,578.0 L451.5,578.8 L457.8,580.0 L462.8,571.0 L469.0,566.0 L476.5,558.8 L484.0,558.0 L491.5,566.0 L499.0,577.5 L504.0,586.0 L511.5,588.8 L517.8,590.0 L524.0,587.5 L531.5,583.8 L539.0,580.0 L549.0,579.0 L555.0,580.0 L560.0,583.0 L565.0,592.0 L572.5,617.5 L578.8,636.0 L583.8,660.0 L590.0,676.0 L600.0,690.0 L608.0,685.0 L613.8,676.0 L620.0,666.0 L630.0,665.5 L641.0,668.0 L648.8,658.8 L657.5,653.8 L661.5,645.0 L666.5,640.5 L674.0,640.0 L680.0,642.5 L685.0,646.0 L693.8,653.0 L701.0,646.0 L708.8,636.0 L717.5,628.8 L723.8,615.0 L730.0,600.0 L735.0,586.0 L740.0,580.0 L746.0,577.0 L753.8,567.5 L760.0,566.0 L767.5,564.0 L777.5,566.0 L787.5,569.0 L795.0,565.5 L801.0,560.0 L805.0,545.0 L808.8,536.0 L812.5,534.5 L820.0,538.8 L825.0,538.0 L829.0,537.0" fill="none" stroke="#5a90ea" stroke-width="1.15" stroke-linejoin="round"/>
<path d="M8.0,177.5 L27.6,179.4 L50.0,180.6 L59.0,184.0 L68.0,188.8 L80.5,202.5 L93.0,217.5 L108.0,236.0 L120.5,253.8 L133.0,270.0 L145.5,287.5 L158.0,305.0 L168.0,318.8 L180.5,335.0 L195.5,355.0 L213.0,371.0 L233.0,386.0 L253.0,403.8 L268.0,425.0 L280.5,437.5 L293.0,449.0 L303.0,455.0 L313.0,458.0 L323.0,455.8 L333.0,454.3 L343.0,456.0 L353.0,458.0 L363.0,461.0 L378.0,471.0 L393.0,477.5 L405.5,482.5 L418.0,491.0 L428.0,498.0 L436.5,505.0 L449.0,513.8 L461.5,518.8 L474.0,522.5 L486.5,530.0 L496.5,536.0 L506.5,540.0 L516.5,538.8 L529.0,537.5 L541.5,535.5 L551.5,535.5 L561.5,539.0 L571.5,545.0 L581.5,555.0 L591.5,567.0 L601.5,576.0 L611.5,582.0 L621.5,585.5 L631.5,588.8 L639.0,596.5 L649.0,600.0 L660.0,605.0 L668.0,610.0 L677.5,612.0 L687.5,612.0 L697.5,606.0 L707.5,597.5 L718.0,585.0 L730.5,575.0 L743.0,567.5 L756.0,560.0 L768.0,550.0 L780.5,540.0 L793.0,530.0 L803.0,523.8 L810.0,520.0 L820.0,518.8 L829.0,518.8" fill="none" stroke="#9400d3" stroke-width="1.1" stroke-linejoin="round"/>
<line x1="433" y1="483" x2="978" y2="478" stroke="#00bfff" stroke-width="2.4"/>
<line x1="401" y1="584" x2="978" y2="552.7" stroke="#00bfff" stroke-width="2.4"/>
<line x1="641.4" y1="643.6" x2="978" y2="418.2" stroke="#ff0000" stroke-width="1"/>
</g>
<g shape-rendering="crispEdges">
<rect x="981" y="504" width="34" height="11" fill="#000" />
<rect x="977" y="510" width="4" height="1" fill="#fff" />
</g>
<g shape-rendering="crispEdges">
<rect x="968" y="6" width="16" height="14" fill="#d4d0c8" />
<rect x="968" y="6" width="15" height="1" fill="#fff" />
<rect x="968" y="6" width="1" height="13" fill="#fff" />
<rect x="983" y="6" width="1" height="14" fill="#404040" />
<rect x="968" y="19" width="16" height="1" fill="#404040" />
<rect x="982" y="7" width="1" height="12" fill="#808080" />
<rect x="969" y="18" width="14" height="1" fill="#808080" />
<rect x="984" y="6" width="16" height="14" fill="#d4d0c8" />
<rect x="984" y="6" width="15" height="1" fill="#fff" />
<rect x="984" y="6" width="1" height="13" fill="#fff" />
<rect x="999" y="6" width="1" height="14" fill="#404040" />
<rect x="984" y="19" width="16" height="1" fill="#404040" />
<rect x="998" y="7" width="1" height="12" fill="#808080" />
<rect x="985" y="18" width="14" height="1" fill="#808080" />
<rect x="1002" y="6" width="16" height="14" fill="#d4d0c8" />
<rect x="1002" y="6" width="15" height="1" fill="#fff" />
<rect x="1002" y="6" width="1" height="13" fill="#fff" />
<rect x="1017" y="6" width="1" height="14" fill="#404040" />
<rect x="1002" y="19" width="16" height="1" fill="#404040" />
<rect x="1016" y="7" width="1" height="12" fill="#808080" />
<rect x="1003" y="18" width="14" height="1" fill="#808080" />
<rect x="972" y="15" width="6" height="2" fill="#000" />
<rect x="968" y="25" width="16" height="14" fill="#d4d0c8" />
<rect x="968" y="25" width="15" height="1" fill="#fff" />
<rect x="968" y="25" width="1" height="13" fill="#fff" />
<rect x="983" y="25" width="1" height="14" fill="#404040" />
<rect x="968" y="38" width="16" height="1" fill="#404040" />
<rect x="982" y="26" width="1" height="12" fill="#808080" />
<rect x="969" y="37" width="14" height="1" fill="#808080" />
<rect x="984" y="25" width="16" height="14" fill="#d4d0c8" />
<rect x="984" y="25" width="15" height="1" fill="#fff" />
<rect x="984" y="25" width="1" height="13" fill="#fff" />
<rect x="999" y="25" width="1" height="14" fill="#404040" />
<rect x="984" y="38" width="16" height="1" fill="#404040" />
<rect x="998" y="26" width="1" height="12" fill="#808080" />
<rect x="985" y="37" width="14" height="1" fill="#808080" />
<rect x="1002" y="25" width="16" height="14" fill="#d4d0c8" />
<rect x="1002" y="25" width="15" height="1" fill="#fff" />
<rect x="1002" y="25" width="1" height="13" fill="#fff" />
<rect x="1017" y="25" width="1" height="14" fill="#404040" />
<rect x="1002" y="38" width="16" height="1" fill="#404040" />
<rect x="1016" y="26" width="1" height="12" fill="#808080" />
<rect x="1003" y="37" width="14" height="1" fill="#808080" />
<rect x="972" y="34" width="6" height="2" fill="#000" />
<rect x="987" y="8" width="9" height="9" fill="#000" />
<rect x="988" y="10" width="7" height="6" fill="#d4d0c8" />
<rect x="989" y="27" width="6" height="6" fill="#000" />
<rect x="990" y="29" width="4" height="3" fill="#d4d0c8" />
<rect x="987" y="30" width="6" height="6" fill="#000" />
<rect x="988" y="32" width="4" height="3" fill="#d4d0c8" />
</g>
<path d="M1006,9l7,7M1013,9l-7,7" stroke="#000" stroke-width="1.6" fill="none"/>
<path d="M1006,28l7,7M1013,28l-7,7" stroke="#000" stroke-width="1.6" fill="none"/>
<rect x="7.5" y="6.5" width="10" height="8" fill="#fff" stroke="#5aa0e8"/>
<rect x="8" y="7" width="9" height="2" fill="#8cc4f4"/>
<rect x="10.5" y="11.5" width="10" height="8" fill="#fff" stroke="#5aa0e8"/>
<rect x="11" y="12" width="9" height="2" fill="#8cc4f4"/>
<path d="M12,15.5l1.5,2.5l1.5,-2.5l1.5,2.5l1.5,-2.5" stroke="#3060d0" fill="none" stroke-width="1"/>
<path d="M9,10l1,-1l1,1M12,9.5l1.5,1" stroke="#3060d0" fill="none" stroke-width="1"/>
<rect x="9.5" y="25.5" width="10" height="8" fill="#fff" stroke="#5aa0e8" stroke-dasharray="1,1"/>
<rect x="10" y="26" width="9" height="2" fill="#8cc4f4"/>
<rect x="12.5" y="30.5" width="10" height="8" fill="#fff" stroke="#5aa0e8" stroke-dasharray="1,1"/>
<rect x="13" y="31" width="9" height="2" fill="#8cc4f4"/>
<path d="M14,34.5l1.5,2.5l1.5,-2.5l1.5,2.5l1.5,-2.5" stroke="#3060d0" fill="none" stroke-width="1"/>
<path d="M11,29l1,-1l1,1M14,28.5l1.5,1" stroke="#3060d0" fill="none" stroke-width="1"/>
<rect x="15.5" y="49.5" width="12" height="10" rx="1" fill="#fff" stroke="#3a7bc8"/>
<rect x="16" y="50" width="11" height="2" fill="#a8d0f4"/>
<path d="M18.5,52v6M17,53.5l1.5,-1.5l1.5,1.5M17,56.5l1.5,1.5l1.5,-1.5" stroke="#6a8ab0" fill="none"/>
<path d="M24.5,52.5h3v4h4v3h-4v4h-3v-4h-4v-3h4z" fill="#22cc22" stroke="#0a8f0a" stroke-width="1"/>
<path d="M25,53h1.500v4h4v1h-4.500z" fill="#8df08d" opacity="0.7"/>
<g shape-rendering="crispEdges"><rect x="35" y="56" width="5" height="1" fill="#000"/><rect x="36" y="57" width="3" height="1" fill="#000"/><rect x="37" y="58" width="1" height="1" fill="#000"/></g>
<rect x="53.5" y="54.5" width="13" height="10" rx="1" fill="#fff" stroke="#3a7bc8"/>
<path d="M56,61.5h9M57.5,60l-1.5,1.5l1.5,1.5M63.5,60l1.5,1.5l-1.5,1.5" stroke="#6a9ac8" fill="none"/>
<rect x="50.5" y="49.5" width="13" height="10" rx="1" fill="#fff" stroke="#3a7bc8"/>
<rect x="51" y="50" width="12" height="2" fill="#a8d0f4"/>
<path d="M53.500,52.5v5M52,54l1.5,-1.500l1.500,1.500M54,56.500h8M60.500,55l1.500,1.500l-1.500,1.500" stroke="#6a8ab0" fill="none"/>
<g shape-rendering="crispEdges"><rect x="70" y="56" width="5" height="1" fill="#000"/><rect x="71" y="57" width="3" height="1" fill="#000"/><rect x="72" y="58" width="1" height="1" fill="#000"/></g>
<rect x="92.5" y="49.5" width="15" height="15" rx="1.5" fill="#fff" stroke="#5a9ae0"/>
<path d="M101,53.500h5M101,55.500h5M94,59.500h5M94,61.500h5" stroke="#d8d8d8"/>
<path d="M98.500,51.500l3.500,3.500h-2v3h-3v-3h-2z" fill="#22b022" stroke="#0a7a0a" stroke-width="0.6"/>
<path d="M101.500,63.500l3.500,-3.500h-2v-3h-3v3h-2z" fill="#f05020" stroke="#c03010" stroke-width="0.6"/>
<circle cx="128.500" cy="57.500" r="5" fill="none" stroke="#606060" stroke-width="1.4"/>
<path d="M121,57.500h5.500M130.500,57.500h5.500M128.500,50v5.500M128.500,59.500v5.500" stroke="#606060" stroke-width="1.4"/>
<path d="M147.500,58.500v-8l1.500,-1.500h3l1.500,1.500h5v8z" fill="#f7e28a" stroke="#c8a030"/>
<path d="M148,53.500h10" stroke="#fff8c0"/>
<path d="M151.500,60v1M151.500,62v1M151.500,64v1" stroke="#404040"/>
<path d="M159.500,53l1.900,4.100l4.400,0.500l-3.300,3l0.900,4.400l-3.900,-2.200l-3.900,2.200l0.900,-4.400l-3.300,-3l4.400,-0.500z" fill="#f8dc50" stroke="#b88820" stroke-width="1"/>
<rect x="176.500" y="50.500" width="15" height="13" rx="1.5" fill="#fff" stroke="#2a6ab8"/>
<rect x="177" y="51" width="4" height="12" fill="#3a80d0"/>
<rect x="178" y="52" width="1" height="1" fill="#000"/><rect x="178" y="56" width="1" height="4" fill="#404040"/>
<path d="M181,52.500h10M181,54.500h10M181,56.500h10M181,58.500h10M181,60.500h10" stroke="#a0c0f0"/>
<rect x="181" y="52" width="1" height="1" fill="#e00"/><rect x="181" y="54" width="1" height="1" fill="#000"/><rect x="181" y="56" width="1" height="1" fill="#000"/><rect x="181" y="58" width="1" height="1" fill="#e00"/>
<rect x="204.500" y="49.500" width="11" height="12" fill="#f4f4f0" stroke="#b0b0a0"/>
<path d="M207.500,51v8M213.500,51v6M206,53.500h3M212,52.500h3" stroke="#808080"/>
<path d="M215.500,60.500l5,4.500" stroke="#c8a020" stroke-width="2.6" stroke-linecap="round"/>
<circle cx="212.300" cy="57" r="4.600" fill="#cfe4fa" fill-opacity="0.85" stroke="#5a90d8" stroke-width="1.2"/>
<rect x="211" y="54" width="2" height="5" fill="#a0a8b8"/>
<path d="M239.500,49.500h8l3,3v10h-11z" fill="#fff" stroke="#808080"/>
<path d="M247.500,49.500v3h3" fill="none" stroke="#808080"/>
<path d="M241,52.500h4M241,54.500h6M241,56.500h3M241,58.500h3" stroke="#a0a0a0"/>
<path d="M247.5,55.5h3v4h4v3h-4v4h-3v-4h-4v-3h4z" fill="#22cc22" stroke="#0a8f0a" stroke-width="1"/>
<path d="M248,56h1.500v4h4v1h-4.500z" fill="#8df08d" opacity="0.7"/>
<path d="M310.500,49.500l7.200,7.200l-7.200,7.200l-7.200,-7.200z" fill="#f8dc40" stroke="#c09818" stroke-width="1.2"/>
<path d="M310.500,51.500l5,5" stroke="#fff8b0" stroke-width="1"/>
<rect x="310" y="52" width="1.600" height="6" fill="#202020"/><rect x="310" y="59.500" width="1.600" height="1.800" fill="#202020"/>
<path d="M331,55.500l5,8.500h4l5,-8.500z" fill="#f8dc50" stroke="#c8a020" stroke-width="0.8"/>
<ellipse cx="338" cy="54.500" rx="7.500" ry="2.600" fill="#5a9ae0" stroke="#2a6ab8" stroke-width="0.8"/>
<ellipse cx="338" cy="52.300" rx="4" ry="3" fill="#6aaaf0" stroke="#2a6ab8" stroke-width="0.8"/>
<circle cx="342.500" cy="61" r="4" fill="#e02010" stroke="#a01008" stroke-width="0.6"/>
<rect x="341" y="59.500" width="3" height="3" fill="#fff"/>
<path d="M479.5,51v14M477,62.5h14" stroke="#505050" stroke-width="1.2" fill="none"/>
<path d="M477.5,52.5l2,-2l2,2M489,60.5l2,2l-2,2" stroke="#505050" stroke-width="1" fill="none"/>
<path d="M485.500,52.500v8M485.500,52.500h2.500M483,59.500h2.500" stroke="#0a8a2a" stroke-width="1.4" fill="none"/>
<path d="M507.5,51v14M505,62.5h14" stroke="#505050" stroke-width="1.2" fill="none"/>
<path d="M505.5,52.5l2,-2l2,2M517,60.5l2,2l-2,2" stroke="#505050" stroke-width="1" fill="none"/>
<path d="M513.500,49v12" stroke="#0a7a1a" stroke-width="1.2"/>
<rect x="511.500" y="51.500" width="4" height="8" fill="#30e050" stroke="#0a8a1a"/>
<path d="M535.5,51v14M533,62.5h14" stroke="#505050" stroke-width="1.2" fill="none"/>
<path d="M533.5,52.5l2,-2l2,2M545,60.5l2,2l-2,2" stroke="#505050" stroke-width="1" fill="none"/>
<path d="M534,60c2,-2 4,-6 6.500,-5.800c2,0.200 3,2.500 5.500,4" stroke="#2a8a3a" stroke-width="1.300" fill="none"/>
<path d="M575,59.5l5.500,5" stroke="#d0a828" stroke-width="2.800" stroke-linecap="round"/>
<circle cx="571" cy="55" r="5" fill="#d4e8fc" stroke="#3a80d8" stroke-width="1.500"/>
<path d="M568,55h6" stroke="#3a78d0" stroke-width="1.800"/>
<path d="M571,52v6" stroke="#3a78d0" stroke-width="1.800"/>
<path d="M603,59.5l5.500,5" stroke="#d0a828" stroke-width="2.800" stroke-linecap="round"/>
<circle cx="599" cy="55" r="5" fill="#d4e8fc" stroke="#3a80d8" stroke-width="1.500"/>
<path d="M596,55h6" stroke="#3a78d0" stroke-width="1.800"/>
<path d="M631.5,51v14M629,62.5h14" stroke="#505050" stroke-width="1.2" fill="none"/>
<path d="M629.5,52.5l2,-2l2,2M641,60.5l2,2l-2,2" stroke="#505050" stroke-width="1" fill="none"/>
<path d="M636.500,53.500l4,3.200l-4,3.200z" fill="#30d040" stroke="#0a8a1a" stroke-width="0.800"/>
<path d="M659.5,51v14M657,62.5h14" stroke="#505050" stroke-width="1.2" fill="none"/>
<path d="M657.5,52.5l2,-2l2,2M669,60.5l2,2l-2,2" stroke="#505050" stroke-width="1" fill="none"/>
<path d="M665.500,51v10" stroke="#2060b0" stroke-width="1.300"/>
<path d="M671,56.500h-4M669,54.500l-2.500,2l2.500,2z" stroke="#d03010" fill="#d03010" stroke-width="1"/>
<path d="M693.500,49.500h5l3,3v7h-8z" fill="#fff" stroke="#808080"/>
<path d="M690.500,52.500h5l3,3v7h-8z" fill="#fff" stroke="#707070"/>
<path d="M692.500,55v6" stroke="#606060"/>
<path d="M698.5,55.5h3v4h4v3h-4v4h-3v-4h-4v-3h4z" fill="#22cc22" stroke="#0a8f0a" stroke-width="1"/>
<path d="M699,56h1.500v4h4v1h-4.500z" fill="#8df08d" opacity="0.7"/>
<g shape-rendering="crispEdges"><rect x="709" y="56" width="5" height="1" fill="#000"/><rect x="710" y="57" width="3" height="1" fill="#000"/><rect x="711" y="58" width="1" height="1" fill="#000"/></g>
<circle cx="732" cy="57" r="7.300" fill="#fff" stroke="#1a6ad0" stroke-width="2.200"/>
<circle cx="732" cy="57" r="8" fill="none" stroke="#1450a8" stroke-width="0.600"/>
<path d="M726,52a8,8 0 0 1 10,-1.500" stroke="#60b8ff" stroke-width="1.500" fill="none"/>
<path d="M731.500,53v4.500h3.500" stroke="#303030" stroke-width="1.200" fill="none"/>
<circle cx="732" cy="62" r="1" fill="#a0c8f8"/>
<g shape-rendering="crispEdges"><rect x="744" y="56" width="5" height="1" fill="#000"/><rect x="745" y="57" width="3" height="1" fill="#000"/><rect x="746" y="58" width="1" height="1" fill="#000"/></g>
<rect x="759.500" y="50.500" width="15" height="13" fill="#fff" stroke="#3a7bc8"/>
<rect x="760" y="51" width="14" height="2" fill="#7ab4ec"/>
<path d="M760,58.500h14" stroke="#3a7bc8"/>
<path d="M761.500,56.500h2.500l1.500,-1.500h3l1.500,1h2l1.500,-1.500" stroke="#8a1010" stroke-width="1.200" fill="none"/>
<path d="M761.500,62h2.500l1.500,-1h2l2,-1.500l2,2.500" stroke="#108a20" stroke-width="1.200" fill="none"/>
<g shape-rendering="crispEdges"><rect x="779" y="56" width="5" height="1" fill="#000"/><rect x="780" y="57" width="3" height="1" fill="#000"/><rect x="781" y="58" width="1" height="1" fill="#000"/></g>
<path d="M20.500,76.500v11l2.800,-2.600l2.200,5.300l1.800,-0.800l-2.200,-5.100h3.600z" fill="#505050" stroke="#505050" stroke-width="0.500"/>
<path d="M45,84.500h6.500M53.500,84.500h6.500M52.500,77v6.500M52.500,85.500v6.500" stroke="#505050" stroke-width="1.200"/>
<path d="M88.500,78v13" stroke="#505050" stroke-width="1.200"/>
<path d="M111,84.500h12" stroke="#505050" stroke-width="1.200"/>
<path d="M139,91l12,-12" stroke="#505050" stroke-width="1.200"/>
<path d="M165.500,85.500l7.500,-7.500M167.500,89.500l11.500,-11M171,90.500l8.500,-8" stroke="#505050" stroke-width="1"/>
<path d="M167,85l2,3l1.500,-5l2,4l1.500,-5l1.500,3l1.500,-4" stroke="#505050" stroke-width="0.900" fill="none"/>
<path d="M179.500,88.500h-3v4h3M176.500,90.500h2.500" stroke="#404040" stroke-width="1.100" fill="none"/>
<path d="M194,77.500h13M194,80.500h13M194,84.500h13M194,88.500h9" stroke="#505050" stroke-width="1" stroke-dasharray="1,1"/>
<path d="M207.500,88.500h-3v4M204.500,90.500h2.500" stroke="#404040" stroke-width="1.100" fill="none"/>
<text x="224.3" y="89" font-family="Liberation Sans,sans-serif" font-size="12px" font-weight="bold" fill="#606060">A</text>
<rect x="251" y="78.500" width="11.500" height="12" fill="none" stroke="#505050" stroke-width="1" stroke-dasharray="1,1"/>
<rect x="250" y="77" width="2" height="2" fill="#505050"/>
<path d="M253,81.500h7M256.500,81v8" stroke="#505050" stroke-width="1.600"/>
<path d="M278.500,77v15M281.500,77v15M287.500,77v15M290.500,77v15" stroke="#505050" stroke-width="1.100"/>
<path d="M284.500,77v15" stroke="#505050" stroke-width="1.100" stroke-dasharray="2,1"/>
<path d="M309.500,77.500l3.500,3.500h-2v1.500h-3v-1.500h-2z" fill="#505050"/>
<path d="M317,91.500l-3.500,-3.500h2v-1.500h3v1.500h2z" fill="#505050"/>
<path d="M309,85l2,2l5,-5.500" stroke="#505050" stroke-width="1.200" fill="none"/>
<g shape-rendering="crispEdges"><rect x="323" y="83" width="5" height="1" fill="#000"/><rect x="324" y="84" width="3" height="1" fill="#000"/><rect x="325" y="85" width="1" height="1" fill="#000"/></g>
<path d="M995,701l-4,3.500l4,3.500z" fill="#000"/><path d="M1009,701l4,3.500l-4,3.500z" fill="#000"/>
<rect x="881" y="722" width="2" height="9" fill="#6b8e23" shape-rendering="crispEdges"/>
<rect x="881" y="731" width="2" height="3" fill="#0a3a6a" shape-rendering="crispEdges"/>
<rect x="884" y="722" width="2" height="8" fill="#6b8e23" shape-rendering="crispEdges"/>
<rect x="884" y="730" width="2" height="4" fill="#0a3a6a" shape-rendering="crispEdges"/>
<rect x="887" y="722" width="2" height="7" fill="#6b8e23" shape-rendering="crispEdges"/>
<rect x="887" y="729" width="2" height="5" fill="#0a3a6a" shape-rendering="crispEdges"/>
<rect x="890" y="722" width="2" height="6" fill="#6b8e23" shape-rendering="crispEdges"/>
<rect x="890" y="728" width="2" height="6" fill="#0a3a6a" shape-rendering="crispEdges"/>
<rect x="893" y="722" width="2" height="5" fill="#6b8e23" shape-rendering="crispEdges"/>
<rect x="893" y="727" width="2" height="7" fill="#0a3a6a" shape-rendering="crispEdges"/>
<rect x="896" y="722" width="2" height="4" fill="#6b8e23" shape-rendering="crispEdges"/>
<rect x="896" y="726" width="2" height="8" fill="#0a3a6a" shape-rendering="crispEdges"/>
<rect x="899" y="722" width="2" height="3" fill="#6b8e23" shape-rendering="crispEdges"/>
<rect x="899" y="725" width="2" height="9" fill="#0a3a6a" shape-rendering="crispEdges"/>
<rect x="902" y="722" width="2" height="2" fill="#6b8e23" shape-rendering="crispEdges"/>
<rect x="902" y="724" width="2" height="10" fill="#0a3a6a" shape-rendering="crispEdges"/>
<g shape-rendering="crispEdges"><rect x="929" y="720" width="95" height="17" fill="#d4d0c8"/><rect x="929" y="720" width="95" height="1" fill="#fff"/><rect x="929" y="720" width="1" height="17" fill="#fff"/><rect x="929" y="736" width="95" height="1" fill="#808080"/><rect x="933" y="723" width="1" height="11" fill="#fff"/><rect x="934" y="723" width="1" height="11" fill="#808080"/></g>
<g stroke="#b010b0" fill="none" stroke-width="1.400">
<path d="M939,726.500c4,-2 9,-2 11,0c1,2 -4,4 -9,4.500M944.500,722v14M941,725l1,5"/>
<circle cx="965.500" cy="730.500" r="2.200"/><path d="M958,726.500l3,1.500"/>
</g>
<path d="M981.500,724c-0.500,4 -2.500,7 -7,9c5,1.500 9.500,-2.500 7,-9z" fill="#b010b0" stroke="#b010b0" stroke-width="0.800"/>
<g shape-rendering="crispEdges"><rect x="989" y="725" width="13" height="8" fill="#d8a0d8"/><rect x="989" y="725" width="13" height="1" fill="#b010b0"/><rect x="989" y="728" width="13" height="1" fill="#b010b0"/><rect x="992" y="725" width="1" height="4" fill="#b010b0"/><rect x="996" y="725" width="1" height="4" fill="#b010b0"/><rect x="999" y="725" width="1" height="4" fill="#b010b0"/><rect x="990" y="732" width="13" height="1" fill="#808080"/>
<rect x="1008" y="723" width="10" height="12" fill="#fff"/><rect x="1008" y="723" width="10" height="3" fill="#b010b0"/><rect x="1008" y="723" width="1" height="12" fill="#404040"/><rect x="1017" y="723" width="1" height="12" fill="#404040"/><rect x="1008" y="734" width="10" height="1" fill="#404040"/><rect x="1010" y="728" width="6" height="1" fill="#404040"/><rect x="1010" y="731" width="6" height="1" fill="#404040"/></g>
</svg>
<div class="t ui" style="left:24px;top:6px;font-size:11.5px;font-weight:bold;color:#fff;line-height:14px"><span style="letter-spacing:0.1px">248227: MetaTrader - </span><span class="cjb" style="letter-spacing:1.5px">模拟帐户</span><span style="letter-spacing:0.1px"> - [USDCHF,Weekly]</span></div>
<div class="t ui" style="left:30px;top:25px;font-size:12px;line-height:14px"><span class="cj">文件</span><span style="font-size:10px;letter-spacing:-0.6px;margin-left:2.5px">(<u>F</u>)</span></div>
<div class="t ui" style="left:88px;top:25px;font-size:12px;line-height:14px"><span class="cj">显视</span><span style="font-size:10px;letter-spacing:-0.6px;margin-left:2.5px">(<u>V</u>)</span></div>
<div class="t ui" style="left:146px;top:25px;font-size:12px;line-height:14px"><span class="cj">插入</span><span style="font-size:10px;letter-spacing:-0.6px;margin-left:2.5px">(<u>I</u>)</span></div>
<div class="t ui" style="left:204px;top:25px;font-size:12px;line-height:14px"><span class="cj">图表</span><span style="font-size:10px;letter-spacing:-0.6px;margin-left:2.5px">(<u>C</u>)</span></div>
<div class="t ui" style="left:262px;top:25px;font-size:12px;line-height:14px"><span class="cj">工具</span><span style="font-size:10px;letter-spacing:-0.6px;margin-left:2.5px">(<u>T</u>)</span></div>
<div class="t ui" style="left:320px;top:25px;font-size:12px;line-height:14px"><span class="cj">窗口</span><span style="font-size:10px;letter-spacing:-0.6px;margin-left:2.5px">(<u>W</u>)</span></div>
<div class="t ui" style="left:378px;top:25px;font-size:12px;line-height:14px"><span class="cj">帮助</span><span style="font-size:10px;letter-spacing:-0.6px;margin-left:2.5px">(<u>H</u>)</span></div>
<div class="t cj" style="left:261px;top:49px;font-size:10.5px;line-height:13px;font-weight:bold">新订单</div>
<div class="t ui" style="left:352px;top:49px;font-size:10px;line-height:13px;font-weight:bold">Expert Advisors</div>
<div class="t per" style="left:394px;top:79px;">M1</div>
<div class="t per" style="left:421px;top:79px;">M5</div>
<div class="t per" style="left:447px;top:79px;">M15</div>
<div class="t per" style="left:475px;top:79px;">M30</div>
<div class="t per" style="left:507px;top:79px;">H1</div>
<div class="t per" style="left:534px;top:79px;">H4</div>
<div class="t per" style="left:563px;top:79px;">D1</div>
<div class="t per" style="left:590px;top:79px;">W1</div>
<div class="t per" style="left:616px;top:79px;">MN</div>
<div class="t ax" style="left:12px;top:104px;font-size:9.8px">USDCHF,Weekly</div>
<div class="t ax" style="left:93px;top:104px;font-size:9.6px">1.2819 1.2994 1.2740 1.2946</div>
<div class="t ax" style="left:984px;top:124.4px;">1.7150</div>
<div class="t ax" style="left:984px;top:156.4px;">1.6800</div>
<div class="t ax" style="left:984px;top:188.4px;">1.6440</div>
<div class="t ax" style="left:984px;top:220.4px;">1.6090</div>
<div class="t ax" style="left:984px;top:252.4px;">1.5740</div>
<div class="t ax" style="left:984px;top:284.4px;">1.5390</div>
<div class="t ax" style="left:984px;top:316.4px;">1.5040</div>
<div class="t ax" style="left:984px;top:348.4px;">1.4690</div>
<div class="t ax" style="left:984px;top:380.4px;">1.4330</div>
<div class="t ax" style="left:984px;top:412.4px;">1.3980</div>
<div class="t ax" style="left:984px;top:444.4px;">1.3630</div>
<div class="t ax" style="left:984px;top:476.4px;">1.3280</div>
<div class="t ax" style="left:984px;top:540.4px;">1.2570</div>
<div class="t ax" style="left:984px;top:572.4px;">1.2220</div>
<div class="t ax" style="left:984px;top:604.4px;">1.1870</div>
<div class="t ax" style="left:984px;top:636.4px;">1.1520</div>
<div class="t ax" style="left:984px;top:668.4px;">1.1170</div>
<div class="t ax" style="left:984px;top:505px;color:#fff">1.2946</div>
<div class="t ax" style="left:8px;top:680px;">24 Feb 2002</div>
<div class="t ax" style="left:72px;top:680px;">16 Jun 2002</div>
<div class="t ax" style="left:136px;top:680px;">6 Oct 2002</div>
<div class="t ax" style="left:200px;top:680px;">26 Jan 2003</div>
<div class="t ax" style="left:264px;top:680px;">18 May 2003</div>
<div class="t ax" style="left:328px;top:680px;">7 Sep 2003</div>
<div class="t ax" style="left:392px;top:680px;">28 Dec 2003</div>
<div class="t ax" style="left:456px;top:680px;">18 Apr 2004</div>
<div class="t ax" style="left:520px;top:680px;">8 Aug 2004</div>
<div class="t ax" style="left:584px;top:680px;">28 Nov 2004</div>
<div class="t ax" style="left:648px;top:680px;">20 Mar 2005</div>
<div class="t ax" style="left:712px;top:680px;">10 Jul 2005</div>
<div class="t ax" style="left:776px;top:680px;">30 Oct 2005</div>
<div class="t tab" style="left:19px;top:700px;">USDCHF,H1</div>
<div class="t tab" style="left:98px;top:700px;">EURUSD,H4</div>
<div class="t tab" style="left:177px;top:700px;">EURUSD,Weekly</div>
<div class="t tab" style="left:378px;top:700px;">GBPUSD,Daily</div>
<div class="t tab" style="left:467px;top:700px;">GBPUSD,H1</div>
<div class="t tab" style="left:548px;top:700px;">GBPUSD,H1</div>
<div class="t tab" style="left:627px;top:700px;">USDJPY,H4</div>
<div class="t tab" style="left:703px;top:700px;">USDJPY,H4</div>
<div class="t tab" style="left:779px;top:700px;">USDJPY,Weekly</div>
<div class="t tab" style="left:878px;top:700px;">USDJPY,H1</div>
<div class="t tab" style="left:277px;top:700px;color:#000">USDCHF,Weekly</div>
<div class="t tab" style="left:956px;top:700px;width:29px;overflow:hidden">EURJPY,H1</div>
<div class="t ui" style="left:7px;top:721px;font-size:10px;font-weight:bold;line-height:13px"><span class="cj" style="font-size:10.5px;letter-spacing:.5px">寻求帮助</span>, <span class="cj" style="font-size:10.5px;letter-spacing:.5px">请按</span>F1<span class="cj" style="font-size:10.5px">键</span></div>
<div class="t ui" style="left:923px;top:722px;font-size:10px;font-weight:bold;width:6px;overflow:hidden">8</div>
<div class="t ui" style="left:170px;top:721px;font-size:10px;font-weight:bold;line-height:13px">Default</div>
</body></html>
